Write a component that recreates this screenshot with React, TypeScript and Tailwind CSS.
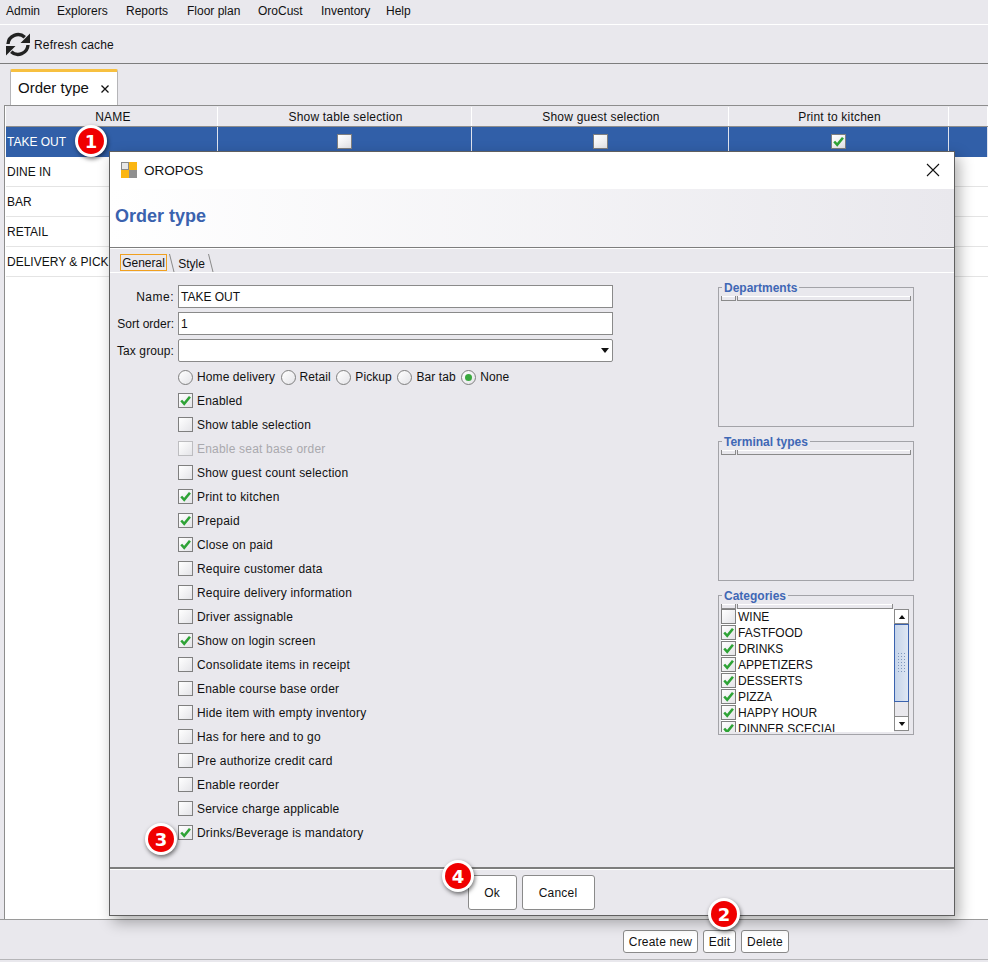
import React from "react";

const font = { fontFamily: '"Liberation Sans", Arial, sans-serif' };

function Check({ className = "" }: { className?: string }) {
  return (
    <svg viewBox="0 0 14 14" className={className}>
      <path d="M2.4 7 L5.6 10.6 L11.8 3" fill="none" stroke="#2ea336" strokeWidth="2.8" />
    </svg>
  );
}

function Box({ checked = false, disabled = false, size = "w-[15px] h-[15px]" }: { checked?: boolean; disabled?: boolean; size?: string }) {
  return (
    <span
      className={`inline-flex shrink-0 items-center justify-center border bg-gradient-to-br from-white to-[#e4e4e8] ${size} ${
        disabled ? "border-[#bdbdc0]" : "border-[#7f7f7f]"
      }`}
    >
      {checked && <Check className="w-[13px] h-[13px]" />}
    </span>
  );
}

function Badge({ n, className }: { n: number; className: string }) {
  return (
    <div
      className={`absolute z-20 flex h-[32px] w-[32px] items-center justify-center rounded-full bg-white shadow-[1px_2px_4px_rgba(0,0,0,0.55)] ${className}`}
    >
      <div
        className="flex h-[26px] w-[26px] items-center justify-center rounded-full bg-[#f00000] text-[18px] font-bold tracking-normal text-white"
        style={{ fontFamily: '"DejaVu Sans", sans-serif' }}
      >
        {n}
      </div>
    </div>
  );
}

function Btn({ children, className }: { children: React.ReactNode; className: string }) {
  return (
    <button className={`flex items-center justify-center rounded-[3px] border border-[#8a8a8a] bg-white text-[12px] tracking-[0.2px] text-[#111] ${className}`}>
      {children}
    </button>
  );
}

function Group({ title, headerW, className = "", children }: { title: string; headerW: string; className?: string; children?: React.ReactNode }) {
  return (
    <div className={`relative h-[140px] w-[196px] border border-[#a3a3a8] px-[2px] pt-[8px] ${className}`}>
      <span className="absolute left-[3px] top-[-7px] bg-[#e9e8ed] px-[2px] text-[12px] font-bold leading-[14px] tracking-normal text-[#3f67b5]">{title}</span>
      <div className={`flex h-[5px] gap-[1px] ${headerW}`}>
        <div className="w-[15px] border-x border-b border-t-0 border-[#8a8a8a] shadow-[inset_0_1px_0_#fff]" />
        <div className="flex-1 border-x border-b border-t-0 border-[#8a8a8a] shadow-[inset_0_1px_0_#fff]" />
      </div>
      {children}
    </div>
  );
}

const checks: [string, boolean, boolean?][] = [
  ["Enabled", true],
  ["Show table selection", false],
  ["Enable seat base order", false, true],
  ["Show guest count selection", false],
  ["Print to kitchen", true],
  ["Prepaid", true],
  ["Close on paid", true],
  ["Require customer data", false],
  ["Require delivery information", false],
  ["Driver assignable", false],
  ["Show on login screen", true],
  ["Consolidate items in receipt", false],
  ["Enable course base order", false],
  ["Hide item with empty inventory", false],
  ["Has for here and to go", false],
  ["Pre authorize credit card", false],
  ["Enable reorder", false],
  ["Service charge applicable", false],
  ["Drinks/Beverage is mandatory", true],
];

const cats: [string, boolean][] = [
  ["WINE", false],
  ["FASTFOOD", true],
  ["DRINKS", true],
  ["APPETIZERS", true],
  ["DESSERTS", true],
  ["PIZZA", true],
  ["HAPPY HOUR", true],
  ["DINNER SCECIAL", true],
];

function Radio({ label, on = false }: { label: string; on?: boolean }) {
  return (
    <span className="flex items-center gap-[4px] tracking-[0.1px]">
      <span className="flex h-[15px] w-[15px] items-center justify-center rounded-full border border-[#7f7f7f] bg-gradient-to-br from-white to-[#e4e4e8]">
        {on && <span className="h-[7px] w-[7px] rounded-full bg-[#3aa83f]" />}
      </span>
      {label}
    </span>
  );
}

function Field({ label, track, children }: { label: string; track: string; children: React.ReactNode }) {
  return (
    <div className="flex items-center">
      <span className={`w-[65px] pr-[4px] text-right ${track}`}>{label}</span>
      {children}
    </div>
  );
}

const cols = ["w-[212px]", "w-[254px]", "w-[257px]", "w-[220px]", "flex-1"];
const headers = ["NAME", "Show table selection", "Show guest selection", "Print to kitchen", ""];
const rows = ["TAKE OUT", "DINE IN", "BAR", "RETAIL", "DELIVERY & PICKUP"];
const menu: [string, string][] = [
  ["Admin", "w-[51px]"],
  ["Explorers", "w-[69px]"],
  ["Reports", "w-[61px]"],
  ["Floor plan", "w-[71px]"],
  ["OroCust", "w-[63px]"],
  ["Inventory", "w-[65px]"],
  ["Help", "w-[40px]"],
];

export default function App() {
  return (
    <div className="relative h-[962px] w-[988px] overflow-hidden bg-[#e9e8ed] text-[12px] tracking-[0.2px] text-[#111]" style={font}>
      {/* menu */}
      <div className="flex h-[25px] items-center border-b border-white pb-[2px] pl-[6px] tracking-normal">
        {menu.map(([m, w]) => (
          <span key={m} className={w}>
            {m}
          </span>
        ))}
      </div>
      {/* toolbar */}
      <div className="flex h-[39px] items-center gap-[4px] border-b border-[#7d7d7d] pl-[6px] pt-[1px]">
        <svg viewBox="0 0 24 24" className="h-[25px] w-[24px]">
          <g fill="none" stroke="#222" strokeWidth="3.4">
            <path d="M2 11.5 A10 10 0 0 1 18.8 4.8" />
            <path d="M22 12.5 A10 10 0 0 1 5.2 19.2" />
          </g>
          <path d="M24 1 V10.5 H14.5 Z M0 23 V13.5 H9.5 Z" fill="#222" />
        </svg>
        <span>Refresh cache</span>
      </div>
      {/* tabs */}
      <div className="flex h-[41px] items-end pl-[10px]">
        <div className="flex h-[36px] w-[108px] items-center gap-[12px] rounded-t-[2px] border-x border-t-[3px] border-x-[#b5b5b8] border-t-[#f7c040] bg-white pl-[7px] text-[15px] tracking-normal">
          <span>Order type</span>
          <svg viewBox="0 0 8 8" className="h-[8px] w-[8px]">
            <path d="M0.5 0.5 L7.5 7.5 M7.5 0.5 L0.5 7.5" stroke="#111" strokeWidth="1.3" />
          </svg>
        </div>
      </div>
      {/* table */}
      <div className="ml-[4px] flex h-[814px] flex-col border-l border-t border-[#8d8d8d] bg-white pl-[1px]">
        <div className="flex h-[21px] shrink-0 border-b border-[#8d8d8d] bg-[#e9e8ed] pt-[1px]">
          {headers.map((h, i) => (
            <div key={i} className={`flex items-center justify-center border-r border-white ${cols[i]} ${i === 0 ? "pl-[3px]" : "pl-[2px]"}`}>
              {h}
            </div>
          ))}
        </div>
        <div className="flex h-[30px] bg-[#315fa8] text-white">
          {[0, 1, 2, 3, 4].map((i) => (
            <div key={i} className={`flex items-center border-r border-[#dfe3ee] ${cols[i]} ${i === 0 ? "pl-[1px] tracking-normal" : "justify-center pb-[2px]"}`}>
              {i === 0 && rows[0]}
              {(i === 1 || i === 2) && <Box />}
              {i === 3 && <Box checked />}
            </div>
          ))}
        </div>
        {rows.slice(1).map((r) => (
          <div key={r} className="flex h-[30px] items-center border-b border-[#e4e4e4] pl-[1px] tracking-normal">
            {r}
          </div>
        ))}
      </div>
      <div className="flex h-[41px] items-start justify-end gap-[5px] border-y border-t-[#9a9a9a] border-b-[#b5b5b8] pr-[199px] pt-[10px]">
        <Btn className="h-[23px] w-[75px]">Create new</Btn>
        <Btn className="h-[23px] w-[33px]">Edit</Btn>
        <Btn className="h-[23px] w-[48px]">Delete</Btn>
      </div>

      {/* dialog */}
      <div className="absolute left-[109px] top-[151px] z-10 flex h-[765px] w-[846px] flex-col border border-[#5f5f5f] bg-[#e9e8ed] shadow-[4px_6px_14px_rgba(0,0,0,0.32)]">
        <div className="flex h-[37px] shrink-0 items-center bg-white pb-[1px] pl-[11px] pr-[14px]">
          <svg viewBox="0 0 16 16" className="mr-[7px] h-[16px] w-[16px]">
            <rect x="0.5" y="0.5" width="7" height="7" fill="#e8e8e8" stroke="#8a8a8a" />
            <rect x="8" y="0" width="8" height="8" fill="#fbb612" />
            <rect x="0" y="8" width="8" height="8" fill="#fbb612" />
            <rect x="8" y="8" width="8" height="8" fill="#8f8f8f" />
          </svg>
          <span className="mt-[2px] text-[13.5px] tracking-normal">OROPOS</span>
          <svg viewBox="0 0 14 14" className="ml-auto h-[14px] w-[14px]">
            <path d="M1 1 L13 13 M13 1 L1 13" stroke="#111" strokeWidth="1.1" />
          </svg>
        </div>
        <div className="flex h-[59px] shrink-0 items-center border-b border-[#7d7d7d] bg-gradient-to-r from-white to-[#e9e8ed] pb-[3px] pl-[5px] text-[18px] font-bold tracking-normal text-[#3a62ae]">
          Order type
        </div>
        <div className="flex h-[24px] shrink-0 items-end border-t border-white pl-[10px]">
          <div className="mb-[1px] flex h-[17px] w-[47px] items-center justify-center border border-[#f0a020] tracking-normal">General</div>
          <svg viewBox="0 0 6 18" className="ml-[2px] h-[18px] w-[6px]">
            <path d="M0.5 0 L5 18" stroke="#8a8a8a" fill="none" />
          </svg>
          <div className="flex h-[17px] w-[33px] items-center justify-center tracking-normal">Style</div>
          <svg viewBox="0 0 6 18" className="h-[18px] w-[6px]">
            <path d="M0.5 0 L5 18" stroke="#8a8a8a" fill="none" />
          </svg>
        </div>
        {/* content */}
        <div className="flex h-[597px] shrink-0 justify-between border-b-2 border-t border-b-[#7d7d7d] border-t-white pl-[3px] pr-[40px] pt-[12px]">
          <div className="flex w-[500px] flex-col">
            <div className="flex flex-col gap-[4px]">
              <Field label="Name:" track="tracking-[0.5px]">
                <div className="flex h-[23px] w-[435px] items-center border border-[#8a8a8a] bg-white pl-[2px] tracking-normal">TAKE OUT</div>
              </Field>
              <Field label="Sort order:" track="tracking-normal">
                <div className="flex h-[23px] w-[435px] items-center border border-[#8a8a8a] bg-white pl-[2px]">1</div>
              </Field>
              <Field label="Tax group:" track="tracking-[0.1px]">
                <div className="flex h-[23px] w-[435px] items-center justify-end rounded-[2px] border border-[#8a8a8a] bg-white pr-[3px]">
                  <svg viewBox="0 0 8 5" className="h-[5px] w-[8px]">
                    <path d="M0 0 H8 L4 5 Z" fill="#111" />
                  </svg>
                </div>
              </Field>
            </div>
            <div className="ml-[65px] mt-[7px] flex h-[16px] items-center gap-[5.5px]">
              <Radio label="Home delivery" />
              <Radio label="Retail" />
              <Radio label="Pickup" />
              <Radio label="Bar tab" />
              <Radio label="None" on />
            </div>
            <div className="ml-[65px] mt-[8px] flex flex-col gap-[8px]">
              {checks.map(([t, c, d]) => (
                <div key={t} className={`flex h-[16px] items-center gap-[4px] ${d ? "text-[#a9a9ae]" : ""}`}>
                  <Box checked={c} disabled={d} size="mb-[2px] h-[15px] w-[15px]" />
                  <span>{t}</span>
                </div>
              ))}
            </div>
          </div>
          <div className="flex flex-col gap-[14px] pt-[2px]">
            <Group title="Departments" headerW="w-[190px]" />
            <Group title="Terminal types" headerW="w-[190px]" />
            <Group title="Categories" headerW="w-[172px]">
              <div className="flex h-[123px] w-[188px] overflow-hidden">
                <div className="w-[173px] shrink-0 bg-white">
                  {cats.map(([t, c]) => (
                    <div key={t} className="flex h-[16px] items-center gap-[2px] tracking-normal">
                      <Box checked={c} size="mb-[2px] h-[15px] w-[15px]" />
                      <span className="whitespace-nowrap">{t}</span>
                    </div>
                  ))}
                </div>
                <div className="flex h-[122px] w-[15px] flex-col">
                  <div className="flex h-[15px] shrink-0 items-center justify-center border border-[#8a8a8a] bg-white">
                    <svg viewBox="0 0 8 5" className="h-[4px] w-[8px]">
                      <path d="M0 5 H8 L4 0 Z" fill="#111" />
                    </svg>
                  </div>
                  <div className="flex h-[78px] shrink-0 items-center justify-center border border-[#3a62ae] bg-gradient-to-r from-[#c5d4ea] to-[#dfe7f3]">
                    <div className="h-[22px] w-[10px] bg-[radial-gradient(#7f98bf_1px,transparent_1px)] bg-[length:3px_3px]" />
                  </div>
                  <div className="flex-1 border-x border-[#8a8a8a]" />
                  <div className="flex h-[15px] shrink-0 items-center justify-center border border-[#8a8a8a] bg-white">
                    <svg viewBox="0 0 8 5" className="h-[4px] w-[8px]">
                      <path d="M0 0 H8 L4 5 Z" fill="#111" />
                    </svg>
                  </div>
                </div>
              </div>
            </Group>
          </div>
        </div>
        {/* footer */}
        <div className="flex flex-1 items-center justify-center gap-[5px] border-t border-white pr-[2px]">
          <Btn className="h-[35px] w-[49px]">Ok</Btn>
          <Btn className="h-[35px] w-[73px]">Cancel</Btn>
        </div>
      </div>

      <Badge n={1} className="left-[75px] top-[125px]" />
      <Badge n={2} className="left-[708px] top-[898px]" />
      <Badge n={3} className="left-[145px] top-[823px]" />
      <Badge n={4} className="left-[442px] top-[860px]" />
    </div>
  );
}
